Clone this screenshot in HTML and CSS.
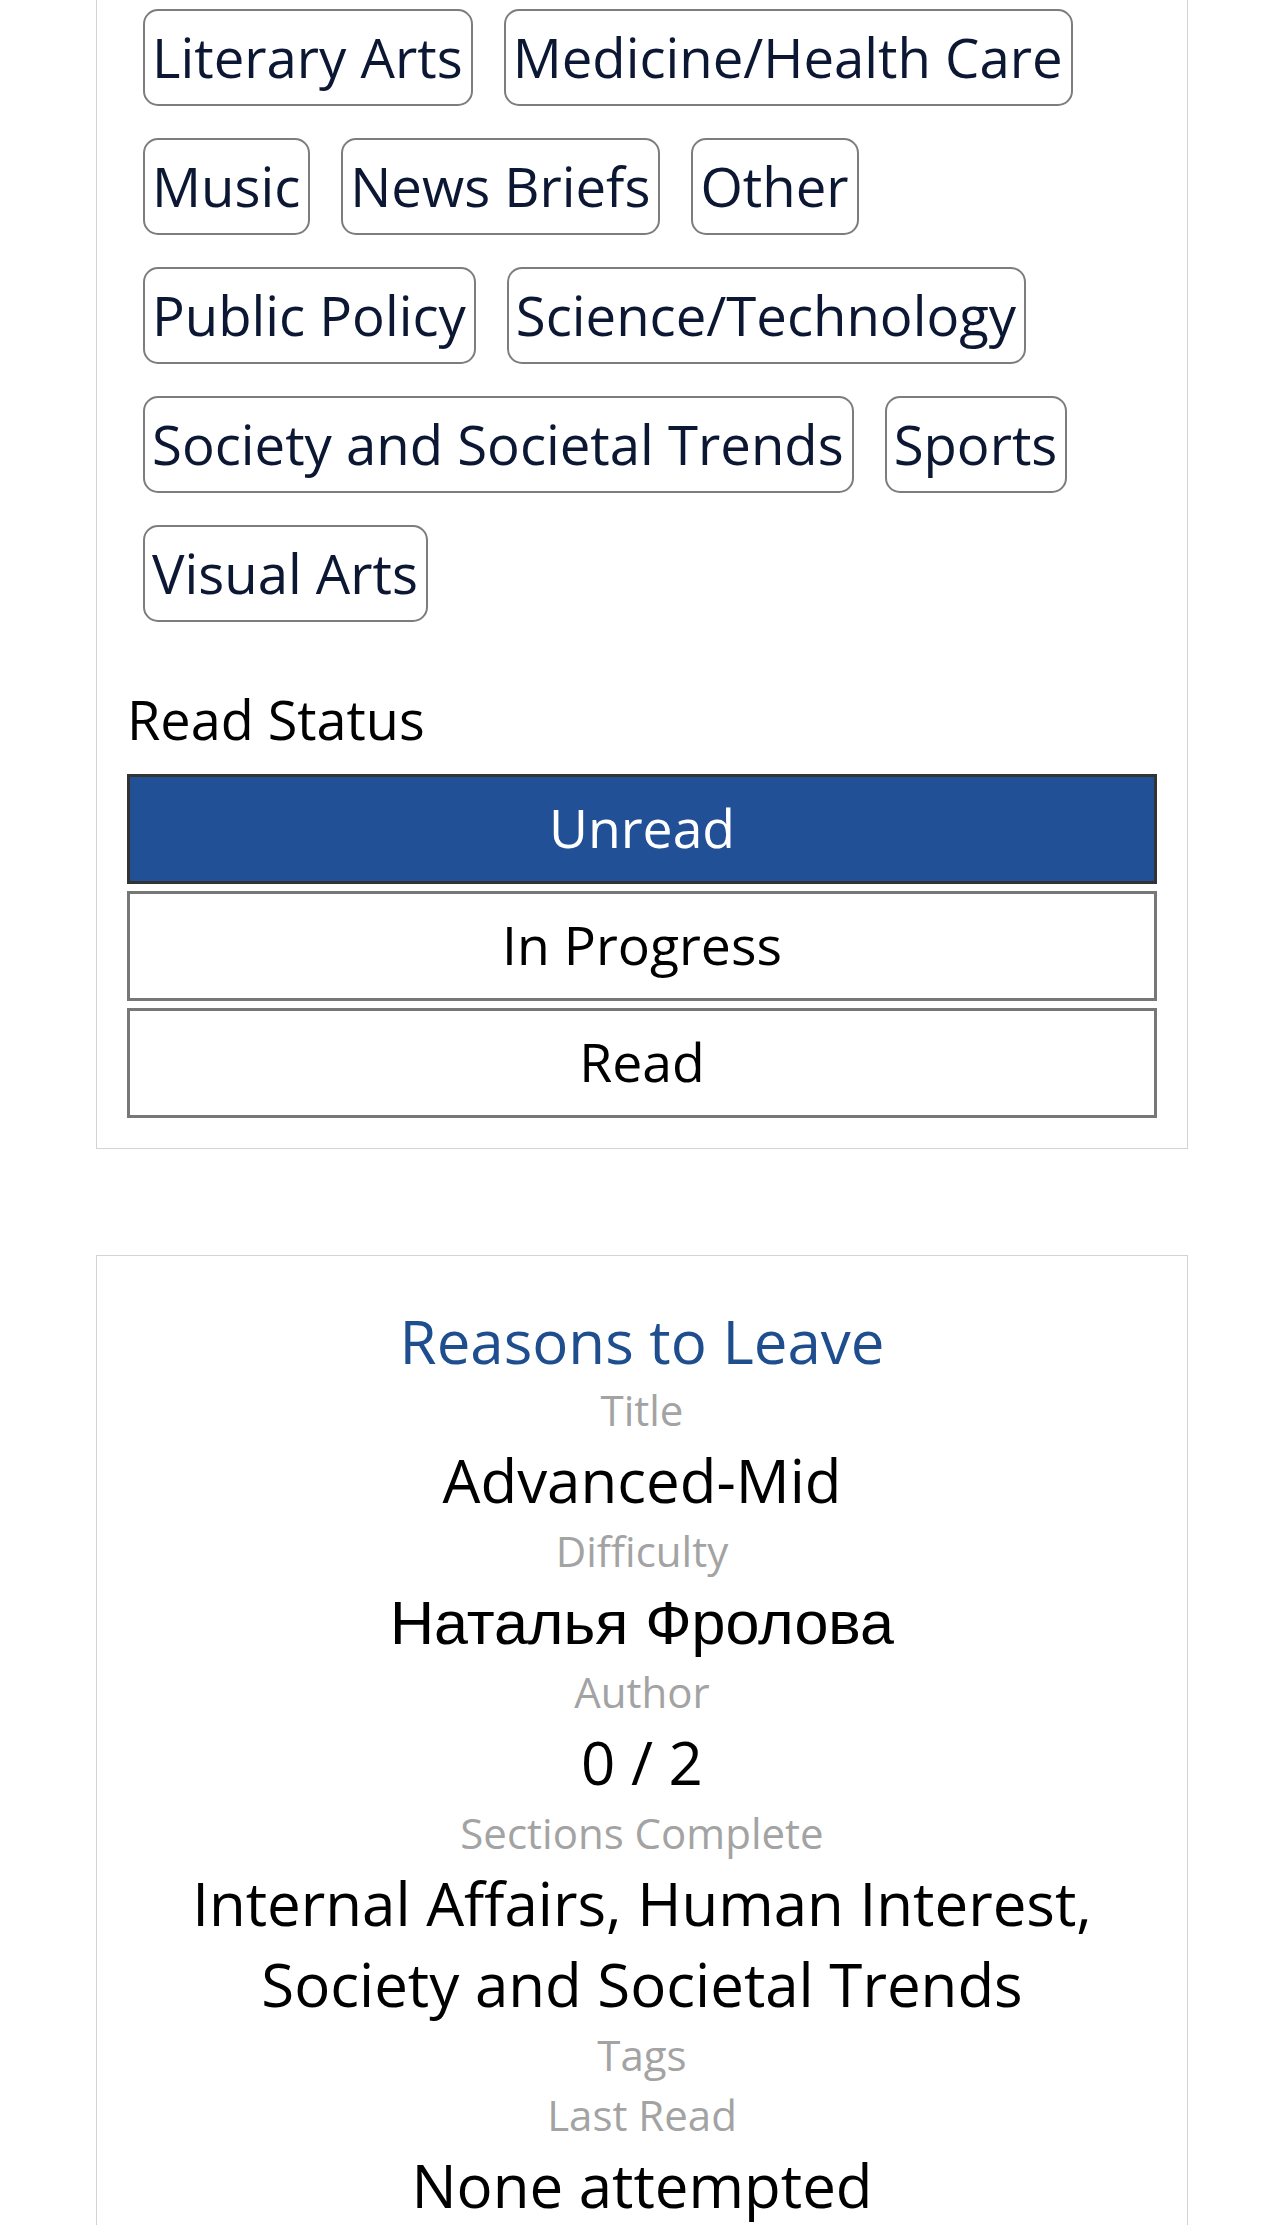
FILE: index.html
```html
<!DOCTYPE html>
<html lang="en">
<head>
<meta charset="utf-8">
<title>Stories</title>
<link rel="stylesheet" href="styles.css">
</head>
<body>
<main class="page">
  <section class="card card-cut">
    <div class="tags">
      <button class="tag">Literary Arts</button>
      <button class="tag">Medicine/Health Care</button>
      <button class="tag">Music</button>
      <button class="tag">News Briefs</button>
      <button class="tag">Other</button>
      <button class="tag">Public Policy</button>
      <button class="tag">Science/Technology</button>
      <button class="tag">Society and Societal Trends</button>
      <button class="tag">Sports</button>
      <button class="tag">Visual Arts</button>
    </div>
    <h3 class="section-label">Read Status</h3>
    <div class="status-list">
      <button class="status status-active">Unread</button>
      <button class="status">In Progress</button>
      <button class="status">Read</button>
    </div>
  </section>

  <section class="card story">
    <h2 class="story-title">Reasons to Leave</h2>
    <div class="field-label">Title</div>
    <div class="field-value">Advanced-Mid</div>
    <div class="field-label">Difficulty</div>
    <div class="field-value"><span class="cyr">Наталья Фролова</span></div>
    <div class="field-label">Author</div>
    <div class="field-value">0 / 2</div>
    <div class="field-label">Sections Complete</div>
    <div class="field-value">Internal Affairs, Human Interest, Society and Societal Trends</div>
    <div class="field-label">Tags</div>
    <div class="field-label">Last Read</div>
    <div class="field-value">None attempted</div>
  </section>
</main>
</body>
</html>
```

FILE: styles.css
```css
html, body {
  margin: 0;
  padding: 0;
  background: #ffffff;
}

body {
  font-family: "Open Sans", "Liberation Sans", sans-serif;
  color: #000000;
}

.page {
  padding: 0 96px 40px;
}

.card {
  border: 1px solid #d3d3d3;
  padding: 0 30px 30px;
  background: #ffffff;
}

.card-cut {
  border-top: none;
}

.tags {
  display: flex;
  flex-wrap: wrap;
  gap: 32px 31px;
  padding: 9px 16px 0;
}

.tag {
  font-family: "Open Sans", sans-serif;
  font-size: 54.5px;
  line-height: 77px;
  color: #0b1733;
  background: #ffffff;
  border: 2px solid #7d7d7d;
  border-radius: 15px;
  padding: 8px 8px 8px 7px;
  margin: 0;
}

.section-label {
  font-size: 54px;
  font-weight: 400;
  line-height: 75px;
  margin: 60px 0 17px;
  color: #000000;
}

.status-list {
  display: flex;
  flex-direction: column;
  gap: 7px;
}

.status {
  display: block;
  width: 100%;
  font-family: "Open Sans", sans-serif;
  font-size: 53.5px;
  line-height: 71px;
  padding: 15px 0 18px;
  margin: 0;
  border: 3px solid #777777;
  background: #ffffff;
  color: #000000;
  text-align: center;
}

.status-active {
  background: #215096;
  border-color: #333333;
  color: #ffffff;
}

.story {
  margin-top: 106px;
  padding-top: 46px;
  text-align: center;
}

.story-title {
  font-size: 60px;
  font-weight: 400;
  line-height: 78px;
  color: #1f4e8f;
  margin: 0;
}

.field-label {
  font-size: 42px;
  line-height: 60px;
  color: #a3a3a3;
}

.field-value {
  font-size: 60px;
  line-height: 81px;
  color: #000000;
}

.cyr {
  font-family: "Liberation Sans", Arial, sans-serif;
  font-size: 61px;
  line-height: 61px;
}
```
